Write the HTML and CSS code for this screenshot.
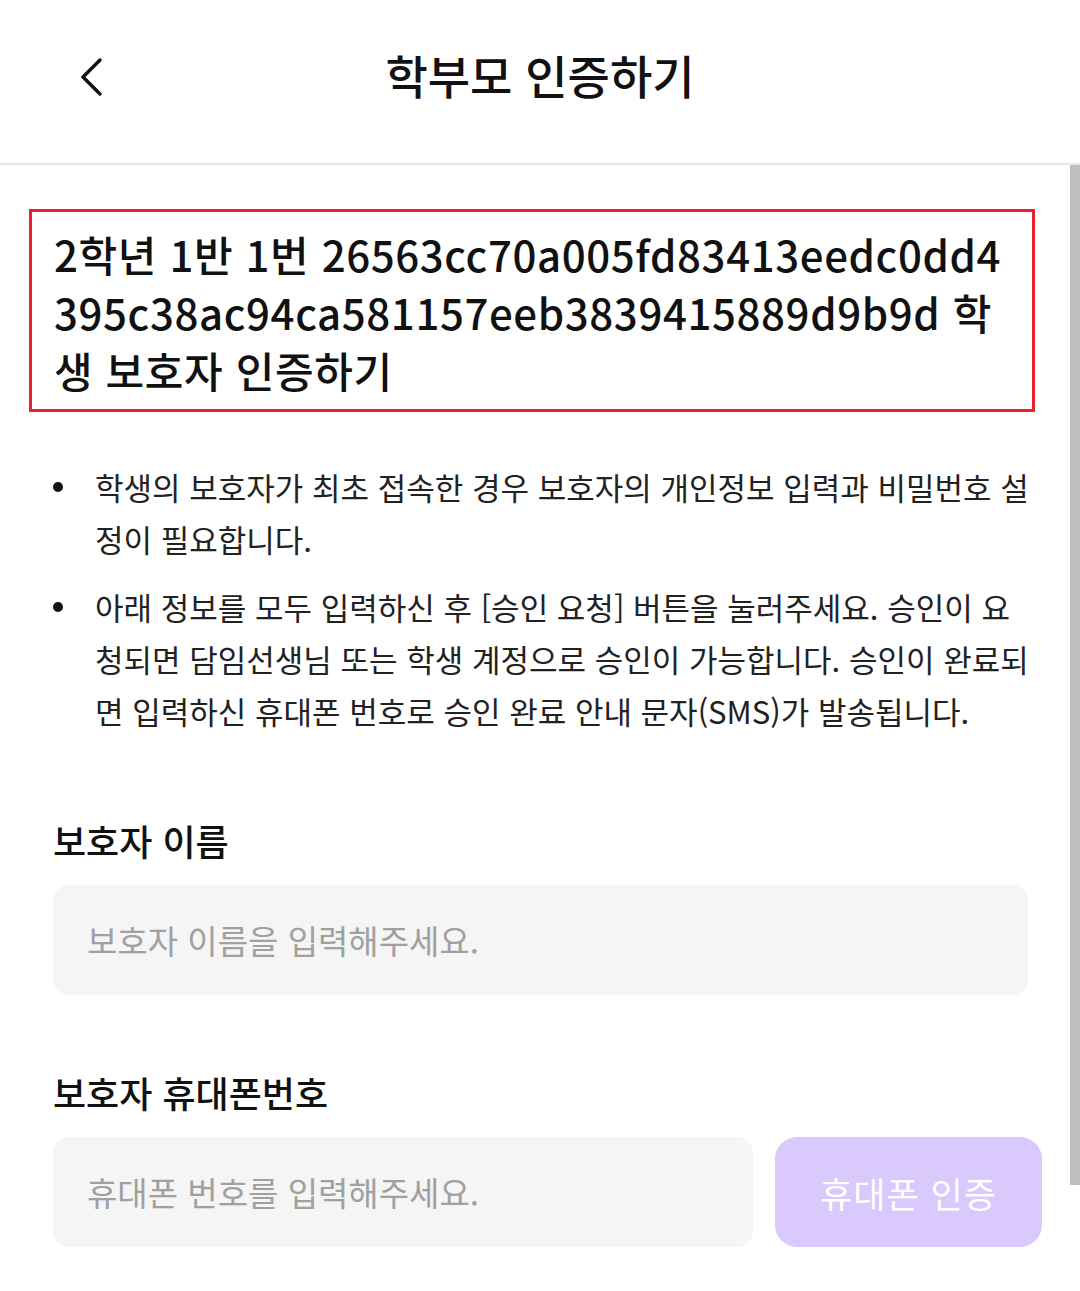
FILE: index.html
```html
<!DOCTYPE html>
<html lang="ko">
<head>
<meta charset="utf-8">
<link rel="stylesheet" href="styles.css">
</head>
<body>
<div class="app">
  <header class="topbar">
    <button class="back" aria-label="뒤로">
      <svg width="26" height="38" viewBox="0 0 26 38"><path d="M22 2 L5 19 L22 36" fill="none" stroke="#111" stroke-width="3.4" stroke-linecap="round" stroke-linejoin="round"/></svg>
    </button>
    <h1 class="title">학부모 인증하기</h1>
    <span></span>
  </header>
  <div class="body">
    <main class="content">
      <div class="student-box">2학년 1반 1번 26563cc70a005fd83413eedc0dd4395c38ac94ca581157eeb3839415889d9b9d 학생 보호자 인증하기</div>
      <ul class="notes">
        <li>학생의 보호자가 최초 접속한 경우 보호자의 개인정보 입력과 비밀번호 설정이 필요합니다.</li>
        <li>아래 정보를 모두 입력하신 후 [승인 요청] 버튼을 눌러주세요. 승인이 요청되면 담임선생님 또는 학생 계정으로 승인이 가능합니다. 승인이 완료되면 입력하신 휴대폰 번호로 승인 완료 안내 문자(SMS)가 발송됩니다.</li>
      </ul>
      <section class="field">
        <label class="label">보호자 이름</label>
        <input class="input" type="text" placeholder="보호자 이름을 입력해주세요.">
      </section>
      <section class="field">
        <label class="label">보호자 휴대폰번호</label>
        <div class="row">
          <input class="input" type="text" placeholder="휴대폰 번호를 입력해주세요.">
          <button class="verify">휴대폰 인증</button>
        </div>
      </section>
    </main>
    <div class="scrollbar"><div class="thumb"></div></div>
  </div>
</div>
</body>
</html>
```
FILE: styles.css
```css
* { box-sizing: border-box; }
html, body { margin: 0; padding: 0; background: #fff; }
body {
  font-family: "Noto Sans CJK KR", "Noto Sans", sans-serif;
  color: #111;
  overflow: hidden;
}
.app { height: 1291px; display: flex; flex-direction: column; }
.topbar {
  flex: 0 0 165px;
  display: grid;
  grid-template-columns: 1fr auto 1fr;
  align-items: center;
  border-bottom: 2px solid #e6e6e6;
  padding-bottom: 16px;
}
.back {
  justify-self: start;
  margin-left: 78px;
  margin-top: 6px;
  background: none; border: 0; padding: 0;
  display: flex;
}
.title {
  margin: 0;
  font-size: 46px;
  font-weight: 500;
  letter-spacing: 0;
  color: #111;
}
.body { flex: 1; display: flex; min-height: 0; }
.content {
  flex: 1;
  overflow: hidden;
  padding: 44px 35px 0 29px;
}
.scrollbar { flex: 0 0 10px; background: #fff; }
.thumb { height: 1020px; background: #bfbfbf; }
.student-box {
  border: 3px solid #e8202e;
  padding: 13px 20px 10px 22px;
  font-size: 42px;
  line-height: 58px;
  font-weight: 500;
  letter-spacing: 0.6px;
  word-break: break-all;
}
.notes {
  list-style: none;
  margin: 49px 0 0 0;
  padding: 0 0 0 24px;
}
.notes li {
  position: relative;
  padding-left: 42px;
  font-size: 31px;
  line-height: 52px;
  letter-spacing: 0;
  color: #222;
  margin-bottom: 16px;
  word-break: break-all;
}
.notes li::before {
  content: "";
  position: absolute;
  left: 0; top: 21px;
  width: 10px; height: 10px;
  border-radius: 50%;
  background: #111;
}
.field { margin-top: 79px; padding-left: 24px; }
.field + .field { margin-top: 73px; }
.label {
  display: block;
  font-size: 36px;
  font-weight: 500;
  letter-spacing: 0;
  line-height: 48px;
  margin-bottom: 21px;
}
.input {
  width: 975px;
  height: 110px;
  border: 0;
  border-radius: 16px;
  background: #f5f5f5;
  padding: 0 34px;
  font-family: inherit;
  font-size: 33px;
  letter-spacing: 0;
  outline: none;
}
.input::placeholder { color: #a0a0a0; }
.row { display: flex; gap: 22px; }
.row .input { flex: 0 0 700px; width: 700px; }
.verify {
  flex: 0 0 267px;
  height: 110px;
  border: 0;
  border-radius: 22px;
  background: #d9c9fc;
  color: #fff;
  font-family: inherit;
  font-size: 35px;
  letter-spacing: 1px;
}
```
